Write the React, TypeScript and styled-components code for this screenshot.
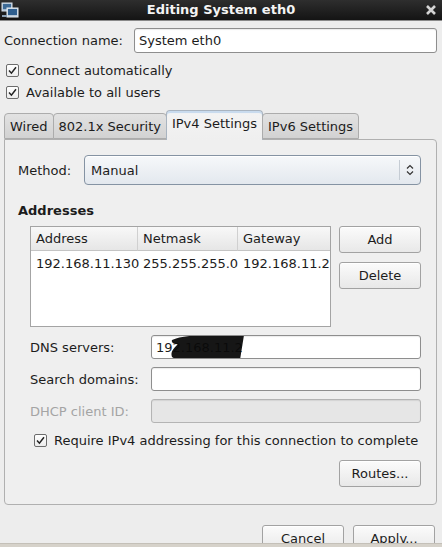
import React from "react";
import styled, { createGlobalStyle } from "styled-components";

const Global = createGlobalStyle`
  html, body { margin: 0; padding: 0; background: #ededed; }
  body { font-family: "DejaVu Sans", "Noto Sans", sans-serif; font-size: 13px; color: #1c1c1c; }
  * { box-sizing: border-box; }
`;

const Window = styled.div`
  width: 442px;
  height: 547px;
  overflow: hidden;
  display: flex;
  flex-direction: column;
  background: #ededed;
`;

const TitleBar = styled.div`
  height: 21px;
  flex: none;
  display: flex;
  align-items: center;
  justify-content: space-between;
  padding: 0 5px 0 1px;
  background: linear-gradient(#2e2e2e, #141414);
  border-bottom: 1px solid #8a8a8a;
  position: relative;
`;

const Title = styled.div`
  position: absolute;
  left: 0;
  right: 0;
  text-align: center;
  color: #f4f4f4;
  font-weight: bold;
  font-size: 13px;
  line-height: 20px;
  pointer-events: none;
`;

const Body = styled.div`
  flex: 1;
  display: flex;
  flex-direction: column;
  padding: 0 5px 0 4px;
  min-height: 0;
`;

const FormRow = styled.div<{ $top?: number; $labelW?: number; $h?: number }>`
  display: flex;
  align-items: center;
  height: ${(p) => p.$h ?? 24}px;
  margin-top: ${(p) => p.$top ?? 0}px;
  & > label {
    width: ${(p) => p.$labelW ?? 130}px;
    flex: none;
  }
`;

const Label = styled.label<{ $disabled?: boolean }>`
  color: ${(p) => (p.$disabled ? "#a4a4a4" : "#1c1c1c")};
  white-space: nowrap;
`;

const Entry = styled.div<{ $disabled?: boolean }>`
  flex: 1;
  height: 100%;
  border: 1px solid ${(p) => (p.$disabled ? "#b4b4b4" : "#8e8e8e")};
  border-radius: 3px;
  background: ${(p) => (p.$disabled ? "#e6e6e6" : "#ffffff")};
  box-shadow: inset 0 1px 1px rgba(0, 0, 0, 0.08);
  display: flex;
  align-items: center;
  padding-left: 4px;
  position: relative;
  overflow: hidden;
  white-space: nowrap;
`;

const CheckRow = styled.div<{ $top?: number; $indent?: number }>`
  display: flex;
  align-items: center;
  gap: 7px;
  height: 22px;
  margin-top: ${(p) => p.$top ?? 0}px;
  padding-left: ${(p) => p.$indent ?? 2}px;
`;

const CheckBox = styled.span`
  width: 13px;
  height: 13px;
  flex: none;
  border: 1px solid #6c6c6c;
  border-radius: 2px;
  background: linear-gradient(#ffffff, #ececec);
  display: flex;
  align-items: center;
  justify-content: center;
`;

const TabStrip = styled.div`
  display: flex;
  align-items: flex-end;
  height: 29px;
  margin-top: 7px;
  position: relative;
  z-index: 1;
`;

const Tab = styled.div<{ $active?: boolean }>`
  height: ${(p) => (p.$active ? 30 : 26)}px;
  padding: 0 5px;
  display: flex;
  align-items: center;
  justify-content: center;
  white-space: nowrap;
  border: 1px solid ${(p) => (p.$active ? "#a9b4c0" : "#acacac")};
  border-bottom: ${(p) => (p.$active ? "none" : "1px solid #acacac")};
  border-radius: 4px 4px 0 0;
  margin-bottom: ${(p) => (p.$active ? -1 : 0)}px;
  margin-left: -1px;
  padding-bottom: ${(p) => (p.$active ? 4 : 0)}px;
  background: ${(p) =>
    p.$active
      ? "linear-gradient(#dfe9f4 0px, #f3f3f3 3px, #efefef 100%)"
      : "linear-gradient(#e2e2e2, #d2d2d2)"};
  box-shadow: ${(p) => (p.$active ? "inset 0 2px 0 #c9dbee" : "none")};
  &:first-child { margin-left: 0; }
`;

const Panel = styled.div`
  height: 366px;
  flex: none;
  border: 1px solid #b0b0b0;
  border-radius: 0 4px 4px 4px;
  background: #efefef;
  padding: 15px 15px 0 13px;
  display: flex;
  flex-direction: column;
`;

const Combo = styled.div`
  flex: 1;
  height: 100%;
  border: 1px solid #8593a3;
  border-radius: 4px;
  background: linear-gradient(#f6f8fa, #e3e8ee);
  display: flex;
  align-items: center;
  padding-left: 6px;
  box-shadow: inset 0 1px 0 #ffffff;
`;

const ComboText = styled.span`
  flex: 1;
`;

const ComboArrow = styled.span`
  width: 21px;
  height: 20px;
  border-left: 1px solid #c5ccd4;
  display: flex;
  align-items: center;
  justify-content: center;
`;

const Heading = styled.div`
  font-weight: bold;
  margin-top: 17px;
  line-height: 18px;
`;

const AddrSection = styled.div`
  display: flex;
  gap: 8px;
  margin-top: 6px;
  padding-left: 12px;
`;

const Tree = styled.div`
  width: 302px;
  height: 101px;
  border: 1px solid #a4a4a4;
  background: #ffffff;
  display: grid;
  grid-template-columns: 107px 100px 1fr;
  grid-template-rows: 24px 24px;
  align-content: start;
`;

const HeadCell = styled.div<{ $last?: boolean }>`
  background: linear-gradient(#f8f8f8, #e6e6e6);
  border-bottom: 1px solid #c4c4c4;
  border-right: ${(p) => (p.$last ? "none" : "1px solid #d0d0d0")};
  display: flex;
  align-items: center;
  padding-left: 5px;
`;

const Cell = styled.div`
  display: flex;
  align-items: center;
  padding-left: 5px;
  white-space: nowrap;
`;

const SideButtons = styled.div`
  display: flex;
  flex-direction: column;
  gap: 9px;
`;

const Button = styled.div`
  width: 82px;
  height: 27px;
  flex: none;
  border: 1px solid #a2a2a2;
  border-radius: 3px;
  background: linear-gradient(#fbfbfb, #e8e8e8);
  display: flex;
  align-items: center;
  justify-content: center;
  box-shadow: inset 0 1px 0 #ffffff;
`;

const FieldList = styled.div`
  display: flex;
  flex-direction: column;
  gap: 8px;
  margin-top: 8px;
  padding-left: 12px;
`;

const RightRow = styled.div<{ $top?: number }>`
  display: flex;
  justify-content: flex-end;
  margin-top: ${(p) => p.$top ?? 0}px;
`;

const ButtonBar = styled.div`
  flex: 1;
  display: flex;
  justify-content: flex-end;
  gap: 9px;
  padding: 20px 2px 0 0;
  overflow: hidden;
  min-height: 0;
`;

const BottomStrip = styled.div`
  height: 4px;
  flex: none;
  background: #d6d2ca;
  border-top: 1px solid #c4c0b8;
`;

const Redaction = styled.svg`
  position: absolute;
  left: 14px;
  top: -2px;
`;

const Check = () => (
  <CheckBox>
    <svg width="9" height="9" viewBox="0 0 9 9">
      <path d="M1 4.6 L3.4 7.2 L8 1.2" fill="none" stroke="#222" strokeWidth="1.5" />
    </svg>
  </CheckBox>
);

export default function App() {
  return (
    <Window>
      <Global />
      <TitleBar>
        <svg width="18" height="18" viewBox="0 0 18 18">
          <rect x="1" y="2" width="10" height="8" fill="#9fb6cc" stroke="#d8e2ec" />
          <rect x="2" y="3" width="8" height="5" fill="#3c6a96" />
          <rect x="6" y="7" width="11" height="9" fill="#b8c8d8" stroke="#e6edf3" />
          <rect x="7" y="8" width="9" height="6" fill="#2f5f8f" />
          <rect x="1" y="14" width="5" height="2" fill="#8aa0b4" />
        </svg>
        <Title>Editing System eth0</Title>
        <svg width="12" height="12" viewBox="0 0 12 12">
          <path d="M2 2 L10 10 M10 2 L2 10" stroke="#d4d4d4" strokeWidth="2.6" />
        </svg>
      </TitleBar>
      <Body>
        <FormRow $top={7} $h={25}>
          <Label>Connection name:</Label>
          <Entry>System eth0</Entry>
        </FormRow>
        <CheckRow $top={6}>
          <Check />
          <span>Connect automatically</span>
        </CheckRow>
        <CheckRow>
          <Check />
          <span>Available to all users</span>
        </CheckRow>
        <TabStrip>
          <Tab>Wired</Tab>
          <Tab>802.1x Security</Tab>
          <Tab $active>IPv4 Settings</Tab>
          <Tab>IPv6 Settings</Tab>
        </TabStrip>
        <Panel>
          <FormRow $h={30} $labelW={66}>
            <Label>Method:</Label>
            <Combo>
              <ComboText>Manual</ComboText>
              <ComboArrow>
                <svg width="8" height="12" viewBox="0 0 8 12">
                  <path d="M1 4.5 L4 1.5 L7 4.5 M1 7.5 L4 10.5 L7 7.5" fill="none" stroke="#333" strokeWidth="1.2" />
                </svg>
              </ComboArrow>
            </Combo>
          </FormRow>
          <Heading>Addresses</Heading>
          <AddrSection>
            <Tree>
              <HeadCell>Address</HeadCell>
              <HeadCell>Netmask</HeadCell>
              <HeadCell $last>Gateway</HeadCell>
              <Cell>192.168.11.130</Cell>
              <Cell>255.255.255.0</Cell>
              <Cell>192.168.11.2</Cell>
            </Tree>
            <SideButtons>
              <Button>Add</Button>
              <Button>Delete</Button>
            </SideButtons>
          </AddrSection>
          <FieldList>
            <FormRow $labelW={121}>
              <Label>DNS servers:</Label>
              <Entry>
                192.168.11.2
                <Redaction width="80" height="28" viewBox="0 0 80 28">
                  <path
                    d="M6 6 C14 2 30 1 48 1 L78 1 L74 26 L30 26 C18 27 10 26 6 23 C4 18 8 14 12 10 C8 10 5 9 6 6 Z"
                    fill="#0a0a0a"
                    opacity="0.95"
                  />
                </Redaction>
              </Entry>
            </FormRow>
            <FormRow $labelW={121}>
              <Label>Search domains:</Label>
              <Entry />
            </FormRow>
            <FormRow $labelW={121}>
              <Label $disabled>DHCP client ID:</Label>
              <Entry $disabled />
            </FormRow>
          </FieldList>
          <CheckRow $top={6} $indent={16}>
            <Check />
            <span>Require IPv4 addressing for this connection to complete</span>
          </CheckRow>
          <RightRow $top={9}>
            <Button>Routes...</Button>
          </RightRow>
        </Panel>
        <ButtonBar>
          <Button>Cancel</Button>
          <Button>Apply...</Button>
        </ButtonBar>
      </Body>
      <BottomStrip />
    </Window>
  );
}
